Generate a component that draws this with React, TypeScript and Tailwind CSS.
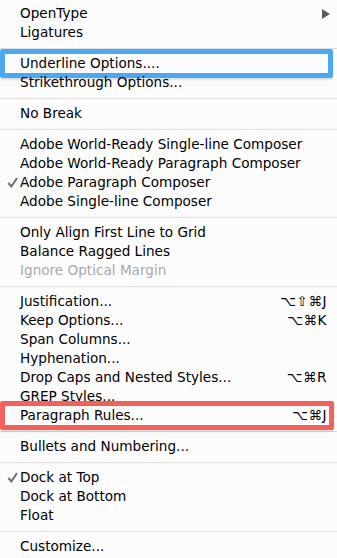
type Item = {
  label: string;
  shortcut?: string;
  checked?: boolean;
  disabled?: boolean;
  submenu?: boolean;
  highlight?: "blue" | "red";
};

const groups: Item[][] = [
  [{ label: "OpenType", submenu: true }, { label: "Ligatures" }],
  [{ label: "Underline Options....", highlight: "blue" }, { label: "Strikethrough Options..." }],
  [{ label: "No Break" }],
  [
    { label: "Adobe World-Ready Single-line Composer" },
    { label: "Adobe World-Ready Paragraph Composer" },
    { label: "Adobe Paragraph Composer", checked: true },
    { label: "Adobe Single-line Composer" },
  ],
  [
    { label: "Only Align First Line to Grid" },
    { label: "Balance Ragged Lines" },
    { label: "Ignore Optical Margin", disabled: true },
  ],
  [
    { label: "Justification...", shortcut: "⌥⇧⌘J" },
    { label: "Keep Options...", shortcut: "⌥⌘K" },
    { label: "Span Columns..." },
    { label: "Hyphenation..." },
    { label: "Drop Caps and Nested Styles...", shortcut: "⌥⌘R" },
    { label: "GREP Styles..." },
    { label: "Paragraph Rules...", shortcut: "⌥⌘J", highlight: "red" },
  ],
  [{ label: "Bullets and Numbering..." }],
  [{ label: "Dock at Top", checked: true }, { label: "Dock at Bottom" }, { label: "Float" }],
  [{ label: "Customize..." }],
];

const Check = () => (
  <svg width="11" height="12" viewBox="0 0 11 12">
    <path d="M0.5 6.8 L2.4 5.2 L4.3 7.8 L9.2 0.6 L10.8 1.8 L4.5 11 Z" fill="#707070" />
  </svg>
);

const Arrow = () => (
  <svg width="8" height="10" viewBox="0 0 8 10">
    <path d="M0 0 L8 5 L0 10 Z" fill="#5a5a5a" />
  </svg>
);

const Row = ({ item }: { item: Item }) => (
  <div
    className={`relative h-[19px] flex items-center pr-[10px] text-[13.6px] leading-none ${
      item.disabled ? "text-[#a8a8a8]" : "text-black"
    }`}
  >
    <div className="w-[20px] shrink-0 flex justify-end pr-[2px]">{item.checked && <Check />}</div>
    <span className="whitespace-nowrap">{item.label}</span>
    {item.shortcut && <span className="ml-auto whitespace-nowrap tracking-[0.5px]">{item.shortcut}</span>}
    {item.submenu && (
      <span className="ml-auto -mr-[3px]">
        <Arrow />
      </span>
    )}
    {item.highlight === "blue" && (
      <div className="absolute left-0 right-[4px] -top-[5px] -bottom-[5px] border-[5px] border-[#4ba9f4] rounded-[2px] shadow-[0_2px_2px_rgba(0,0,0,0.12)]" />
    )}
    {item.highlight === "red" && (
      <div className="absolute left-0 right-[3px] -top-[5px] -bottom-[5px] border-[5px] border-[#f2625a] rounded-[2px] shadow-[0_2px_2px_rgba(0,0,0,0.12)]" />
    )}
  </div>
);

export default function App() {
  return (
    <div className="w-[337px] h-[558px] bg-[#fcfcfc] overflow-hidden pt-[4px] font-['DejaVu_Sans',sans-serif]">
      {groups.map((g, i) => (
        <div key={i}>
          {i > 0 && (
            <div className="h-[12px] flex items-center">
              <div className="h-px w-full bg-[#dedede]" />
            </div>
          )}
          {g.map((item) => (
            <Row key={item.label} item={item} />
          ))}
        </div>
      ))}
    </div>
  );
}
